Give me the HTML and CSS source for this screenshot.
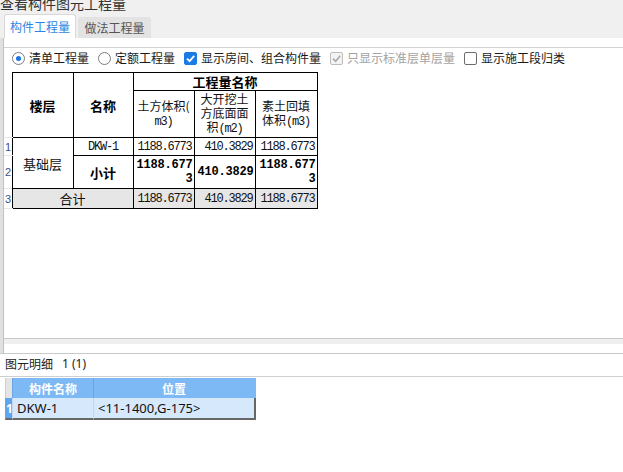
FILE: index.html
```html
<!DOCTYPE html>
<html lang="zh-CN">
<head>
<meta charset="utf-8">
<title>查看构件图元工程量</title>
<link rel="stylesheet" href="styles.css">
</head>
<body>
<div class="title"><span class="title-text">查看构件图元工程量</span></div>
<div class="tabs">
  <div class="tab active">构件工程量</div>
  <div class="tab">做法工程量</div>
</div>
<div class="upper">
  <div class="strip"></div>
  <div class="panel">
    <div class="options">
      <label class="opt"><span class="radio on"></span><span>清单工程量</span></label>
      <label class="opt"><span class="radio"></span><span>定额工程量</span></label>
      <label class="opt"><span class="check on"><svg viewBox="0 0 13 13" width="13" height="13"><path d="M3 6.6 L5.6 9.2 L10.2 3.8" fill="none" stroke="#fff" stroke-width="1.8"/></svg></span><span>显示房间、组合构件量</span></label>
      <label class="opt disabled"><span class="check dis"><svg viewBox="0 0 13 13" width="13" height="13"><path d="M3 6.6 L5.6 9.2 L10.2 3.8" fill="none" stroke="#a9a9a9" stroke-width="1.6"/></svg></span><span>只显示标准层单层量</span></label>
      <label class="opt"><span class="check"></span><span>显示施工段归类</span></label>
    </div>
    <div class="grid">
      <table class="qty">
        <colgroup>
          <col class="c-gut"><col class="c-a"><col class="c-b"><col class="c-c"><col class="c-d"><col class="c-e">
        </colgroup>
        <tr class="h1">
          <td class="gut" rowspan="2"></td>
          <th rowspan="2">楼层</th>
          <th rowspan="2">名称</th>
          <th colspan="3">工程量名称</th>
        </tr>
        <tr class="h2">
          <td class="sub">土方体积(<br><span class="m">m3)</span></td>
          <td class="sub">大开挖土<br>方底面面<br>积<span class="m">(m2)</span></td>
          <td class="sub">素土回填<br>体积<span class="m">(m3)</span></td>
        </tr>
        <tr class="r1">
          <td class="gut">1</td>
          <td class="cjk" rowspan="2">基础层</td>
          <td class="mono ctr">DKW-1</td>
          <td class="mono num">1188.6773</td>
          <td class="mono num">410.3829</td>
          <td class="mono num">1188.6773</td>
        </tr>
        <tr class="r2">
          <td class="gut">2</td>
          <td class="sum">小计</td>
          <td class="mono num bold">1188.677<br>3</td>
          <td class="mono num bold">410.3829</td>
          <td class="mono num bold">1188.677<br>3</td>
        </tr>
        <tr class="r3">
          <td class="gut">3</td>
          <td class="cjk total" colspan="2">合计</td>
          <td class="mono num total">1188.6773</td>
          <td class="mono num total">410.3829</td>
          <td class="mono num total">1188.6773</td>
        </tr>
      </table>
    </div>
    <div class="splitter"><div class="band"></div></div>
  </div>
</div>
<div class="lower">
  <div class="caption"><span>图元明细</span><span class="count">1 (1)</span></div>
  <table class="detail">
    <colgroup><col class="d-gut"><col class="d-a"><col class="d-b"></colgroup>
    <tr class="dh">
      <td class="dgut-h"></td>
      <th>构件名称</th>
      <th class="last">位置</th>
    </tr>
    <tr class="dr">
      <td class="dgut">1</td>
      <td>DKW-1</td>
      <td class="last">&lt;11-1400,G-175&gt;</td>
    </tr>
  </table>
</div>
</body>
</html>
```

FILE: styles.css
```css
* { box-sizing: border-box; }
html, body { margin: 0; padding: 0; }
body {
  width: 623px;
  height: 472px;
  overflow: hidden;
  background: #fff;
  font-family: "Noto Sans CJK SC", "Noto Sans", sans-serif;
  font-size: 12px;
  color: #222;
}

.title {
  height: 14px;
  background: #f0f0f0;
  overflow: hidden;
}
.title-text {
  display: block;
  margin-top: -4px;
  font-size: 14px;
  line-height: 14px;
  color: #333;
}

.tabs {
  display: flex;
  align-items: flex-end;
  gap: 2px;
  height: 24px;
  padding-left: 4px;
  background: #f0f0f0;
}
.tab {
  display: flex;
  align-items: center;
  justify-content: center;
  width: 73px;
  height: 21px;
  background: #e3e3e3;
  color: #555;
  border-radius: 3px 3px 0 0;
  font-size: 12px;
}
.tab.active {
  width: 72px;
  height: 24px;
  background: #fff;
  color: #2b86e3;
  border: 1px solid #d8d8d8;
  border-bottom: none;
}

.upper {
  display: flex;
  height: 315px;
}
.strip {
  width: 3px;
  background: #e0e0e0;
}
.panel {
  flex: 1;
  display: flex;
  flex-direction: column;
  border-left: 1px solid #c2c2c2;
}

.options {
  margin-top: 9px;
  height: 21px;
  border-top: 1px solid #d2d2d2;
  display: flex;
  align-items: center;
  padding-left: 8px;
  color: #1a1a1a;
}
.opt {
  display: flex;
  align-items: center;
  gap: 4px;
  margin-right: 9px;
  line-height: 14px;
}
.opt.disabled { color: #a3a3a3; }
.radio {
  width: 13px;
  height: 13px;
  border: 1px solid #7d7d7d;
  border-radius: 50%;
  background: #fff;
  display: flex;
  align-items: center;
  justify-content: center;
}
.radio.on::after {
  content: "";
  width: 5px;
  height: 5px;
  border-radius: 50%;
  background: #1b74e4;
}
.check {
  width: 13px;
  height: 13px;
  border: 1px solid #6c6c6c;
  border-radius: 2px;
  background: #fff;
  display: flex;
  overflow: hidden;
}
.check svg { display: block; flex: none; margin: -1px; }
.check.on { background: #1b7be4; border-color: #1b7be4; }
.check.dis { background: #f3f3f3; border-color: #bdbdbd; }

.grid {
  flex: 1;
  padding-top: 4px;
}

.qty {
  border-collapse: collapse;
  table-layout: fixed;
  width: 313px;
  font-size: 12px;
  color: #111;
}
.c-gut { width: 8px; }
.c-a { width: 61px; }
.c-b { width: 60px; }
.c-c { width: 61px; }
.c-d { width: 61px; }
.c-e { width: 62px; }

.qty th, .qty td {
  border: 1px solid #000;
  padding: 0 1px;
  text-align: center;
  vertical-align: middle;
  overflow: hidden;
}
.qty th {
  font-size: 13px;
  font-weight: bold;
  line-height: 15px;
  color: #000;
}
.qty td.gut {
  border: none;
  border-bottom: 1px solid #e6e6e6;
  padding: 0 0 0 1px;
  text-align: left;
  font-family: "Liberation Sans", sans-serif;
  font-size: 11px;
  color: #3b4f86;
}
.h1 { height: 18px; }
.h2 { height: 47px; }
.r1 { height: 18px; }
.r2 { height: 33px; }
.r3 { height: 20px; }

.sub {
  font-size: 12px;
  line-height: 14px;
}
.m, .mono {
  font-family: "Liberation Mono", monospace;
  font-size: 12px;
  letter-spacing: -1.2px;
}
.qty td.num {
  text-align: right;
  padding-right: 2px;
  line-height: 14px;
}
.qty td.ctr { text-align: center; }
.qty td.bold {
  font-weight: bold;
  font-size: 12px;
  letter-spacing: -0.2px;
  padding-right: 1px;
  color: #000;
}
.cjk { font-size: 13px; }
.sum { font-size: 13px; font-weight: bold; color: #000; }
.qty td.total { background: #e6e6e6; }

.splitter {
  height: 15px;
  border-top: 1px solid #c9c9c9;
}
.band {
  height: 5px;
  background: #efefef;
}

.lower {
  border-top: 1px solid #c9c9c9;
}
.caption {
  height: 23px;
  display: flex;
  align-items: center;
  padding-left: 5px;
  padding-bottom: 3px;
  border-bottom: 1px solid #cfcfcf;
  font-size: 12px;
  color: #222;
}
.count {
  margin-left: 9px;
  font-family: "Noto Sans", sans-serif;
}

.detail {
  margin-left: 5px;
  margin-top: 1px;
  border-collapse: separate;
  border-spacing: 0;
  table-layout: fixed;
  width: 251px;
}
.d-gut { width: 7px; }
.d-a { width: 81px; }
.d-b { width: 163px; }
.detail th, .detail td {
  padding: 0;
  height: 20px;
  font-size: 13px;
  overflow: hidden;
  white-space: nowrap;
}
.dh th {
  background: #7db9f4;
  color: #fff;
  font-size: 12px;
  font-weight: bold;
  text-align: center;
  border-left: 1px solid #6aa6e6;
}
.dh td.dgut-h {
  background: #e4e4e4;
  border-left: 1px solid #cfcfcf;
}
.dr td {
  background: #d6e8fb;
  border-bottom: 2px solid #676767;
  border-left: 1px solid #c4d7ec;
  padding-left: 4px;
  font-family: "Noto Sans", sans-serif;
  color: #111;
  height: 22px;
}
.dr td.dgut {
  background: #5ea6ef;
  color: #fff;
  font-weight: bold;
  font-size: 12px;
  padding-left: 0;
  text-align: center;
  border-left: 1px solid #5ea6ef;
}
.dr td.last {
  border-right: 2px solid #676767;
}
.dh th.last {
  border-right: 2px solid #7db9f4;
}
```
